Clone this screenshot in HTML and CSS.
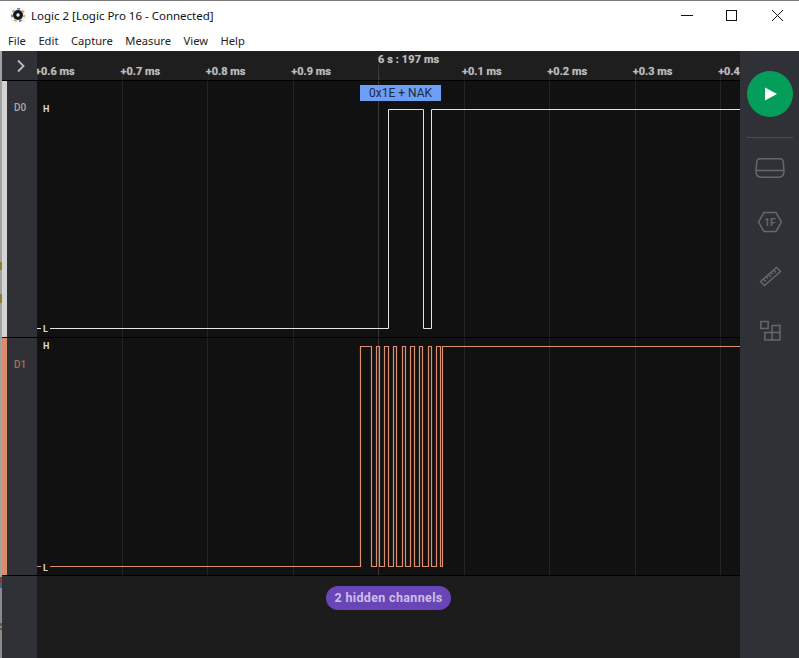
FILE: index.html
```html
<!DOCTYPE html>
<html lang="en">
<head>
<meta charset="utf-8">
<title>Logic 2</title>
<link rel="stylesheet" href="styles.css">
</head>
<body>
<div class="window">
  <header class="chrome">
    <div class="titlebar">
      <svg class="logo" width="16" height="16" viewBox="0 0 16 16">
        <rect x="0.5" y="0.5" width="15" height="15" rx="3" fill="#f4f4f7"/>
        <circle cx="8" cy="8" r="6.200" fill="none" stroke="#f0a028" stroke-width="1.600" stroke-dasharray="2.500 3"/>
        <circle cx="8" cy="8" r="6.200" fill="none" stroke="#3d8fd8" stroke-width="1.600" stroke-dasharray="2.500 8.500" stroke-dashoffset="5"/>
        <circle cx="8" cy="8" r="5" fill="#17171c"/>
        <circle cx="8" cy="8" r="1.700" fill="#f4f4f4"/>
      </svg>
      <span class="title">Logic 2 [Logic Pro 16 - Connected]</span>
      <div class="winctl">
        <svg width="12" height="12" viewBox="0 0 12 12"><path d="M2 6.500H14" stroke="#111" fill="none"/></svg>
        <svg width="12" height="12" viewBox="0 0 12 12"><rect x="1.500" y="1.500" width="10" height="10" stroke="#111" fill="none"/></svg>
        <svg width="12" height="12" viewBox="0 0 12 12"><path d="M1 1L12 12M12 1L1 12" stroke="#111" fill="none"/></svg>
      </div>
    </div>
    <nav class="menu">
      <span>File</span><span>Edit</span><span>Capture</span><span>Measure</span><span>View</span><span>Help</span>
    </nav>
  </header>
  <div class="workspace">
    <main class="content">
      <div class="row ruler-row">
        <div class="rail rail-plain">
          <svg class="chevron" width="10" height="14" viewBox="0 0 10 14"><path d="M2 1.500L7.500 7L2 12.500" fill="none" stroke="#bdbdbf" stroke-width="1.800"/></svg>
        </div>
        <div class="ruler">
          <span class="tick">+0.6 ms</span>
          <span class="tick">+0.7 ms</span>
          <span class="tick">+0.8 ms</span>
          <span class="tick">+0.9 ms</span>
          <span class="tick"></span>
          <span class="tick">+0.1 ms</span>
          <span class="tick">+0.2 ms</span>
          <span class="tick">+0.3 ms</span>
          <span class="tick">+0.4 ms</span>
          <i class="origin-tick"></i>
          <span class="origin">6 s : 197 ms</span>
        </div>
      </div>
      <section class="row channel d0">
        <div class="rail"><i class="swatch"></i><b class="name">D0</b></div>
        <div class="plot">
          <svg class="wave" width="703" height="256" viewBox="0 0 703 256">
            <path class="grid" d="M85.500 0V256M170.500 0V256M256.500 0V256M427.500 0V256M512.500 0V256M598.500 0V256M683.500 0V256"/>
            <path class="grid origin-line" d="M341.500 0V256"/>
            <path class="sig sig-d0" d="M0 247.500H351.500V28.500H386.500V247.500H394.500V28.500H703"/>
          </svg>
          <span class="level lh">H</span>
          <span class="level ll">L</span>
          <span class="bubble">0x1E + NAK</span>
        </div>
      </section>
      <section class="row channel d1">
        <div class="rail"><i class="swatch"></i><b class="name">D1</b></div>
        <div class="plot">
          <svg class="wave" width="703" height="237" viewBox="0 0 703 237">
            <path class="grid" d="M85.500 0V237M170.500 0V237M256.500 0V237M427.500 0V237M512.500 0V237M598.500 0V237M683.500 0V237"/>
            <path class="grid origin-line" d="M341.500 0V237"/>
            <path class="sig sig-d1" d="M0 228.500H323.500V8.500H334.500V228.500H339.500V8.500H342.500V228.500H347.500V8.500H351.500V228.500H356.500V8.500H359.500V228.500H365.500V8.500H368.500V228.500H373.500V8.500H377.500V228.500H382.500V8.500H385.500V228.500H391.500V8.500H394.500V228.500H399.500V8.500H403.500V228.500H405.500V8.500H703"/>
          </svg>
          <span class="level lh">H</span>
          <span class="level ll">L</span>
        </div>
      </section>
      <div class="row footer">
        <div class="rail"></div>
        <div class="hidden-area"><button class="pill">2 hidden channels</button></div>
      </div>
    </main>
    <aside class="tools">
      <button class="run">
        <svg width="14" height="16" viewBox="0 0 14 16"><path d="M1 1.500L13 8L1 14.500Z" fill="#fff"/></svg>
      </button>
      <div class="sep"></div>
      <svg class="tool" width="30" height="24" viewBox="0 0 30 24" fill="none"><path d="M5 2.800H25Q27.800 2.800 28.200 5.500L29 15Q29 21.200 24 21.200H6Q1 21.200 1 15L1.800 5.500Q2.200 2.800 5 2.800Z M1.200 14.500H28.800"/></svg>
      <svg class="tool" width="26" height="24" viewBox="0 0 26 24" fill="none"><path d="M7 2.500H19L24.500 12L19 21.500H7L1.500 12Z"/><text x="13" y="16" class="hex">1F</text></svg>
      <svg class="tool" width="24" height="24" viewBox="0 0 24 24" fill="none"><path d="M2.500 17.500L18.500 3.500L22.500 7.500L6.500 21.500Z M6 15.500L8 17.500M8.500 13L10 14.500M11 11L13 13M13.500 8.800L15 10.300M16 6.500L18 8.500"/></svg>
      <svg class="tool" width="24" height="24" viewBox="0 0 24 24" fill="none"><path d="M2.800 3.500H10.200V10.500H2.800Z M14 7.500H22V22H6.800V14.500H14V22M14 14.500V7.500M14 14.500H22"/></svg>
    </aside>
  </div>
</div>
</body>
</html>
```
FILE: styles.css
```css
* { box-sizing: border-box; }
html, body { margin: 0; height: 100%; overflow: hidden; }
body { font-family: "Noto Sans", sans-serif; background: #fff; }
.window { width: 799px; height: 658px; display: flex; flex-direction: column; border-top: 1px solid #7a7a7a; }

.chrome { height: 50px; background: #fff; flex: none; }
.titlebar { height: 28px; display: flex; align-items: center; padding: 0 0 0 10px; }
.logo { flex: none; }
.title { margin-left: 5px; font-size: 11.500px; color: #111; }
.winctl { margin-left: auto; display: flex; gap: 34px; padding-right: 16px; }
.winctl svg { overflow: visible; }
.menu { height: 22px; display: flex; gap: 12.500px; padding: 2px 0 0 8px; font-size: 11.200px; color: #222; line-height: 20px; }

.workspace { flex: 1; display: flex; min-height: 0; }
.content {
  width: 740px; flex: none; display: flex; flex-direction: column; padding-left: 2px;
  background: linear-gradient(to bottom,
    #a2a2a2 0 211px, #8d7c34 211px 219px, #a2a2a2 219px 243px, #8d7c34 243px 252px, #a2a2a2 252px 526px,
    #8a3c3c 526px 532px, #2a6aa0 532px 537px, #8a8a8c 537px 572px, #6b5a40 572px 575px, #8a8a8c 575px 577px,
    #6b5a40 577px 579px, #8a8a8c 579px);
}
.row { display: flex; }
.rail { width: 35px; flex: none; background: #303136; display: flex; position: relative; }
.rail-plain { align-items: center; justify-content: center; }
.chevron { margin: 0 0 0 -1px; position: relative; left: 2px; }
.swatch { width: 5px; flex: none; display: block; }
.name { flex: 1; text-align: center; font: 500 10px/1 Roboto, sans-serif; padding-right: 4px; }

.ruler-row { height: 30px; border-bottom: 1px solid #000; }
.ruler { flex: 1; background: #1e1e1e; display: flex; overflow: hidden; position: relative; padding-top: 14px; }
.tick { flex: 0 0 85.400px; position: relative; left: -2px; font: 700 11px/14px Roboto, sans-serif; color: #bdbdbd; text-shadow: 0 0 1px rgba(190,190,190,.55); white-space: nowrap; }
.tick::after { content: ""; position: absolute; left: 2px; bottom: 0; width: 1px; height: 4px; background: #2c2c2c; }
.origin-tick { position: absolute; left: 341px; top: 14px; bottom: 0; width: 1px; background: #3a3a3a; }
.origin { position: absolute; left: 341px; top: 2px; font: 700 11px/14px Roboto, sans-serif; letter-spacing: .1px; color: #bdbdbd; text-shadow: 0 0 1px rgba(190,190,190,.55); white-space: nowrap; }

.plot { flex: 1; background: #111112; position: relative; overflow: hidden; }
.wave { display: block; }
.grid { stroke: #242424; stroke-width: 1; fill: none; }
.origin-line { stroke: #383838; }
.sig { fill: none; stroke-width: 1; }
.sig-d0 { stroke: #e4e4e4; }
.sig-d1 { stroke: #dc9070; stroke-width: 1.200; }

.d0 { height: 257px; border-bottom: 1px solid #000; }
.d0 .swatch { background: #d3d3d3; }
.d0 .name { color: #a9a9ab; padding-top: 22px; }
.d1 { height: 238px; border-bottom: 1px solid #000; }
.d1 .swatch { background: #d98d6d; }
.d1 .name { color: #a56f5e; padding-top: 22px; }

.level { position: absolute; left: 4px; font: 700 9px/10px Roboto, sans-serif; color: #dadada; background: #111112; padding: 0 2px; }
.d0 .lh { top: 23px; }
.d0 .ll { top: 243px; }
.d1 .lh { top: 3px; }
.d1 .ll { top: 225px; }
.bubble { position: absolute; left: 323px; top: 4px; width: 81px; height: 16px; background: #6d9ef5; color: #1c2a44; font: 400 12px/16px Roboto, sans-serif; text-align: center; }

.footer { flex: 1; }
.hidden-area { flex: 1; background: #1c1c1d; display: flex; justify-content: center; padding: 10px 0 0 0; }
.pill { height: 24px; width: 125px; border: 0; border-radius: 12px; background: #6945b7; color: #cdbfe9; font: 700 12.500px/24px Roboto, sans-serif; letter-spacing: .35px; padding: 0; }

.tools { flex: 1; background: #303136; display: flex; flex-direction: column; align-items: center; }
.run { width: 46px; height: 46px; margin-top: 20px; flex: none; border: 0; border-radius: 50%; background: #049e5a; display: flex; align-items: center; justify-content: center; padding: 0 0 0 2px; }
.sep { width: 46px; height: 1px; flex: none; background: #4b4c51; margin-top: 20px; margin-bottom: -12px; }
.tool { flex: none; stroke: #66676c; stroke-width: 1.500; margin-top: 30px; }
.hex { font: 700 10.500px Roboto, sans-serif; fill: #66676c; stroke: none; text-anchor: middle; }
```
